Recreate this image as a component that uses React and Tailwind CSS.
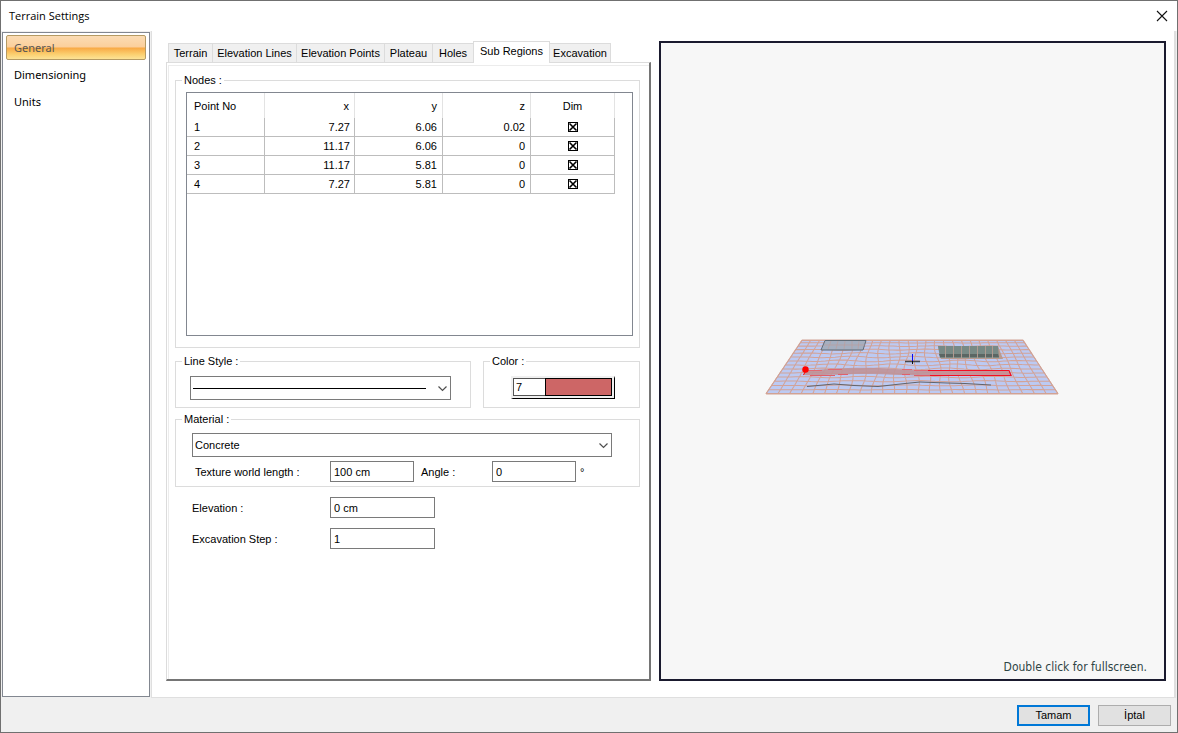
import React, { useState } from "react";

const TABS = ["Terrain", "Elevation Lines", "Elevation Points", "Plateau", "Holes", "Sub Regions", "Excavation"];

const TAB_WIDTHS = {
  Terrain: "w-[45px]",
  "Elevation Lines": "w-[85px]",
  "Elevation Points": "w-[89px]",
  Plateau: "w-[49px]",
  Holes: "w-[42px]",
  "Sub Regions": "w-[77px]",
  Excavation: "w-[62px]",
};

const NODES = [
  { no: "1", x: "7.27", y: "6.06", z: "0.02" },
  { no: "2", x: "11.17", y: "6.06", z: "0" },
  { no: "3", x: "11.17", y: "5.81", z: "0" },
  { no: "4", x: "7.27", y: "5.81", z: "0" },
];

const FIELD = "h-[21px] border border-[#7a7a7a] bg-white px-[3px] outline-none";

/* Projects a terrain coordinate (0..1 on both axes) onto the perspective plane. */
function project(u, v) {
  const t = Math.pow(v, 1.12);
  const left = 42 - 36 * t;
  const right = 263 + 35 * t;
  return [left + (right - left) * u, 15 + 54 * t];
}

function meshPath() {
  const parts = [];
  const cols = 25;
  const rows = 14;
  const steps = 24;
  for (let i = 0; i <= cols; i++) {
    for (let s = 0; s <= steps; s++) {
      const v = s / steps;
      const edge = Math.sin(Math.PI * (i / cols)) * Math.sin(Math.PI * v);
      const [x, y] = project(i / cols + edge * 0.012 * Math.sin(i * 1.1 + v * 7), v);
      parts.push(`${s ? "L" : "M"}${x.toFixed(1)} ${y.toFixed(1)}`);
    }
  }
  for (let j = 0; j <= rows; j++) {
    for (let s = 0; s <= 60; s++) {
      const u = s / 60;
      const edge = Math.sin(Math.PI * (j / rows)) * Math.min(1, 6 * Math.min(u, 1 - u));
      const [x, y] = project(u, j / rows + edge * 0.016 * Math.sin(u * 26 + j * 0.9));
      parts.push(`${s ? "L" : "M"}${x.toFixed(1)} ${y.toFixed(1)}`);
    }
  }
  return parts.join("");
}

const MESH = meshPath();

function Terrain() {
  return (
    <svg className="h-[72px] w-[305px] shrink-0" viewBox="0 0 305 72" role="img" aria-label="Terrain preview">
      <path d="M42 15H263L298 69H6Z" fill="#bccaf3" />
      <path d={MESH} fill="none" stroke="#d2a398" strokeWidth="1.050" />
      <path d="M42 15.500H263L298 68.500H6Z" fill="none" stroke="#d2a293" />
      <path d="M65 15.500H106L103 25H61Z" fill="#a5afc0" stroke="#5f6b76" />
      <path d="M71 16L68 24M78 16L76 24M85 16L84 24M92 16V24M99 16L98 24M64 20H105" stroke="#bb9f9e" strokeWidth="0.7" />
      <path d="M178 21H238L243 34H181Z" fill="#b99a8e" />
      <path d="M178 21H238L239 33H180Z" fill="#788a86" />
      <path d="M179 29H238L239 32H180Z" fill="#5b6663" />
      <path d="M185.500 21V33M193.500 21V33M201.500 21V33M209.500 21V33M217.500 21V33M225.500 21V33M232.500 21V33" stroke="#b09a90" />
      <path d="M45 46C65 44 92 42 118 43C143 44 157 46 178 46L250 46L252 51H178C152 51 132 49 102 49C79 49 60 51 44 50Z" fill="#bf9298" fillOpacity="0.9" />
      <path d="M47 45.500H62M68 44.500H82M142 44.500H152M154 45.500H170" stroke="#e06a74" />
      <path d="M50 50.500H75M78 49.500H88M142 49.500H150M154 50.500H170" stroke="#e05f6b" />
      <path d="M168 45.500H249L251 50.500H170" fill="none" stroke="#f50d24" strokeWidth="1.200" />
      <path d="M172 48H249" stroke="#c98f95" strokeWidth="3" />
      <path d="M47 61.500L74 59L94 60.500L118 61.500L145 58.500L160 57L187 58L205 58.500L231 60" fill="none" stroke="#60646c" />
      <path d="M145 36.500H160" stroke="#46484d" strokeWidth="1.500" />
      <path d="M152.500 29V37" stroke="#0808f5" />
      <path d="M152.500 36V39" stroke="#111111" />
      <circle cx="45.500" cy="44.500" r="3.200" fill="#ff0000" />
      <path d="M45 47L43.500 50" stroke="#ff0000" />
    </svg>
  );
}

function Chevron() {
  return (
    <svg className="pointer-events-none absolute top-0 right-[3px] h-full w-[11px]" viewBox="0 0 11 24" fill="none" stroke="#4f4f4f" strokeWidth="1.200" aria-hidden="true">
      <path d="M1.500 10.500L5.500 14.500L9.500 10.500" />
    </svg>
  );
}

function Group({ title, className, children }) {
  return (
    <fieldset className={`min-w-0 border border-[#dcdcdc] px-1.5 ${className}`}>
      <legend className="h-[14px] px-[2px] leading-[14px]">{title}</legend>
      {children}
    </fieldset>
  );
}

function DimBox({ label }) {
  const [on, setOn] = useState(true);
  return (
    <label className="mx-auto grid size-[10px]">
      <input type="checkbox" aria-label={label} checked={on} onChange={() => setOn(!on)} className="col-start-1 row-start-1 size-[10px] appearance-none border border-black bg-white" />
      <svg className={`pointer-events-none col-start-1 row-start-1 size-[10px] ${on ? "" : "hidden"}`} viewBox="0 0 10 10" stroke="#000" strokeWidth="1.600" aria-hidden="true">
        <path d="M1.500 1.500L8.500 8.500M8.500 1.500L1.500 8.500" />
      </svg>
    </label>
  );
}

function NodesTable() {
  const td = "border-r border-b border-[#bdbdbd] p-0";
  const th = "border-r border-[#e3e3e3] p-0 font-normal";
  return (
    <table className="w-[428px] table-fixed border-separate border-spacing-0">
      <colgroup>
        <col className="w-[78px]" />
        <col className="w-[90px]" />
        <col className="w-[88px]" />
        <col className="w-[88px]" />
        <col className="w-[84px]" />
      </colgroup>
      <thead>
        <tr className="h-[25px]">
          <th className={`${th} pl-[7px] text-left`}>Point No</th>
          <th className={`${th} pr-[5px] text-right`}>x</th>
          <th className={`${th} pr-[5px] text-right`}>y</th>
          <th className={`${th} pr-[5px] text-right`}>z</th>
          <th className={`${th} text-center`}>Dim</th>
        </tr>
      </thead>
      <tbody>
        {NODES.map((n) => (
          <tr key={n.no} className="h-[19px]">
            <td className={`${td} pl-[7px]`}>{n.no}</td>
            <td className={`${td} pr-[4px] text-right`}>{n.x}</td>
            <td className={`${td} pr-[5px] text-right`}>{n.y}</td>
            <td className={`${td} pr-[5px] text-right`}>{n.z}</td>
            <td className={td}>
              <DimBox label={`Dim ${n.no}`} />
            </td>
          </tr>
        ))}
      </tbody>
    </table>
  );
}

function SubRegions() {
  return (
    <div className="flex flex-1 flex-col border-t border-r-2 border-b-2 border-l border-t-[#dcdcdc] border-r-[#757575] border-b-[#757575] border-l-[#dcdcdc] bg-white">
      <div className="mt-[2px] ml-px flex-1 border-t border-l border-[#ececec] pt-[7px] pr-[9px] pl-[6px]">
        <Group title="Nodes :" className="pt-[5px] pb-[11px]">
          <div className="ml-1 h-[244px] overflow-auto border border-[#828790]">
            <NodesTable />
          </div>
        </Group>

        <div className="mt-[6px] flex gap-3">
          <Group title="Line Style :" className="w-[296px] pt-[8px] pb-[7px]">
            <div className="relative ml-2 w-[261px]">
              <select aria-label="Line Style" className="block h-[24px] w-full appearance-none border border-[#7a7a7a] bg-white text-transparent">
                <option>Continuous</option>
              </select>
              <div className="pointer-events-none absolute inset-y-0 right-[25px] left-[3px] flex items-center">
                <div className="h-px w-full bg-black" />
              </div>
              <Chevron />
            </div>
          </Group>
          <Group title="Color :" className="flex-1 pt-[8px] pb-[7px]">
            <div className="ml-[21px] flex h-[23px] w-[104px] border-t-2 border-r border-b border-l-2 border-t-[#f0f0f0] border-r-black border-b-black border-l-[#f0f0f0] bg-[#f0f0f0] pr-[2px] pb-[2px]">
              <input aria-label="Color number" defaultValue="7" className="w-[32px] border border-r-0 border-[#555] bg-white px-[2px] outline-none" />
              <button type="button" aria-label="Pick color" className="flex-1 border border-black bg-[#cd6666]" />
            </div>
          </Group>
        </div>

        <Group title="Material :" className="mt-[4px] pt-[7px] pb-[4px]">
          <div className="relative ml-[10px] w-[420px]">
            <select aria-label="Material" className="block h-[24px] w-full appearance-none border border-[#7a7a7a] bg-white pl-[2px] outline-none">
              <option>Concrete</option>
            </select>
            <Chevron />
          </div>
          <div className="mt-1 ml-[13px] flex items-center">
            <label htmlFor="texture" className="w-[135px]">Texture world length :</label>
            <input id="texture" defaultValue="100 cm" className={`${FIELD} w-[84px]`} />
            <label htmlFor="angle" className="ml-[7px] w-[71px]">Angle :</label>
            <input id="angle" defaultValue="0" className={`${FIELD} w-[84px]`} />
            <span className="ml-1">°</span>
          </div>
        </Group>

        <div className="mt-[10px] ml-[17px] grid grid-cols-[138px_105px] items-center gap-y-[10px]">
          <label htmlFor="elevation">Elevation :</label>
          <input id="elevation" defaultValue="0 cm" className={FIELD} />
          <label htmlFor="step">Excavation Step :</label>
          <input id="step" defaultValue="1" className={FIELD} />
        </div>
      </div>
    </div>
  );
}

export default function App() {
  return (
    <div className="flex min-h-screen flex-col border border-[#707070] bg-[#f0f0f0] font-['Liberation_Sans',Arial,sans-serif] text-[11px] leading-[14px] text-black">
      <header className="flex h-[30px] items-center justify-between bg-white pr-[9px] pl-2">
        <h1 className="font-['Open_Sans','Noto_Sans',sans-serif] text-[11px]">Terrain Settings</h1>
        <button type="button" aria-label="Close" className="size-[12px]">
          <svg className="size-[12px]" viewBox="0 0 12 12" stroke="#111" strokeWidth="1.100" aria-hidden="true">
            <path d="M1 1L11 11M11 1L1 11" />
          </svg>
        </button>
      </header>

      <main className="flex flex-1 pr-[1px]">
        <nav className="mt-[1px] mr-[1px] mb-px ml-px flex w-[148px] flex-col border border-[#828790] bg-white px-[3px] pt-[2px] font-['Noto_Sans','Open_Sans',sans-serif] text-[11px]">
          <button type="button" className="h-[25px] rounded-[2px] border border-[#b59a63] bg-[linear-gradient(#fbdcb4_0%,#fbcf9b_48%,#f8a945_52%,#fbd071_80%,#fde396_100%)] pl-[7px] text-left text-[#555]">
            General
          </button>
          <button type="button" className="mt-[2px] h-[25px] pl-2 text-left">Dimensioning</button>
          <button type="button" className="mt-[2px] h-[25px] pl-2 text-left">Units</button>
        </nav>

        <div className="flex flex-1 border-r-2 border-b border-l border-[#dfdfdf] bg-white pt-[10px] pr-[8px] pb-4 pl-[14px]">
          <section className="flex w-[485px] shrink-0 flex-col">
            <div role="tablist" className="ml-[2px] flex h-[21px] items-end">
              {TABS.map((tab) =>
                tab === "Sub Regions" ? (
                  <button key={tab} role="tab" aria-selected="true" type="button" className={`relative -mr-px -mb-px h-[22px] border border-b-0 border-[#dcdcdc] bg-white pb-[3px] whitespace-nowrap ${TAB_WIDTHS[tab]}`}>
                    {tab}
                  </button>
                ) : (
                  <button key={tab} role="tab" aria-selected="false" type="button" className={`-mr-px h-[19px] border border-b-0 border-[#dcdcdc] bg-[#f0f0f0] whitespace-nowrap ${TAB_WIDTHS[tab]}`}>
                    {tab}
                  </button>
                )
              )}
            </div>
            <SubRegions />
          </section>

          <section className="ml-2 grid flex-1 border-2 border-[#1a1a2e] bg-[#f7f7f7]">
            <div className="col-start-1 row-start-1 flex items-center justify-center">
              <Terrain />
            </div>
            <p className="col-start-1 row-start-1 self-end justify-self-end pr-[17px] pb-[5px] font-['DejaVu_Sans_Condensed','DejaVu_Sans',sans-serif] text-[12px] text-[#2f4545]">
              Double click for fullscreen.
            </p>
          </section>
        </div>
      </main>

      <footer className="flex h-[34px] items-center justify-end gap-2 pr-[6px]">
        <button type="button" className="h-[21px] w-[73px] border-2 border-[#0078d7] bg-[#e1e1e1]">Tamam</button>
        <button type="button" className="h-[21px] w-[73px] border border-[#adadad] bg-[#e1e1e1]">İptal</button>
      </footer>
    </div>
  );
}
